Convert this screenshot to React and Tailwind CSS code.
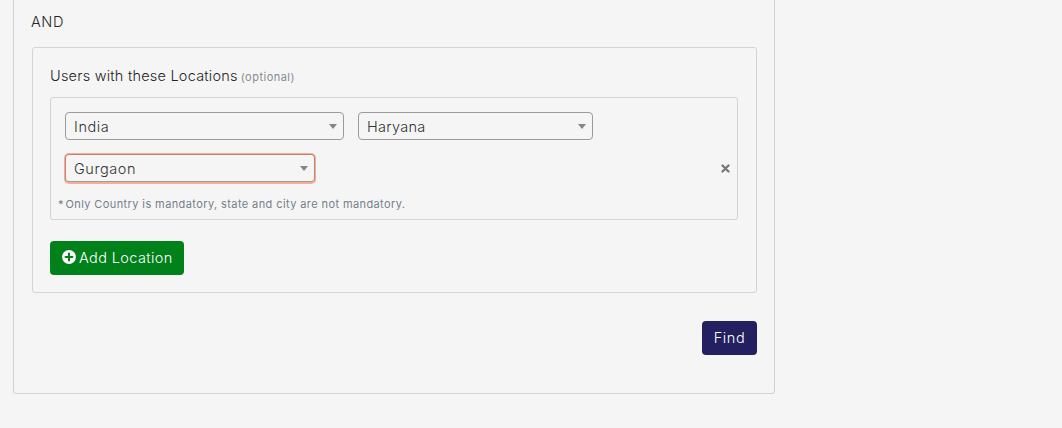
function Select({ value, className, textClass }) {
  return (
    <div className={`flex h-7 items-center justify-between rounded border pl-2 pr-[6px] text-[14.5px] font-light text-[#333] ${className}`}>
      <span className={`whitespace-nowrap pt-px ${textClass}`}>{value}</span>
      <svg className="h-[5px] w-2" viewBox="0 0 8 5" fill="#858585">
        <path d="M0 0h8L4 5z" />
      </svg>
    </div>
  );
}

function PlusCircle() {
  return (
    <svg className="mb-[2px] h-[14px] w-[14px] shrink-0" viewBox="0 0 14 14">
      <circle cx="7" cy="7" r="6.9" fill="currentColor" />
      <path d="M3.6 7h6.8M7 3.6v6.8" stroke="#00811a" strokeWidth="2.1" strokeLinecap="round" />
    </svg>
  );
}

function Times() {
  return (
    <svg className="mr-[2px] h-[9px] w-[9px]" viewBox="0 0 9 9" fill="none" stroke="currentColor" strokeWidth="2.3" strokeLinecap="round">
      <path d="M1.5 1.5l6 6M7.5 1.5l-6 6" />
    </svg>
  );
}

export default function App() {
  return (
    <div className="h-[428px] w-full overflow-hidden bg-[#f5f5f5] pl-[13px] font-['Inter',sans-serif] text-[14.5px] font-light leading-5 text-[#262626]">
      <section className="h-[394px] w-[762px] rounded-b-[3px] border border-t-0 border-[#d3d3d3] pl-[18px] pr-[17px] pt-3">
        <div className="-ml-px h-[35px] pl-px tracking-[0.6px]">
          <span className="-ml-px">AND</span>
        </div>
        <div className="h-[246px] rounded-[3px] border border-[#d3d3d3] pl-[17px] pr-[18px] pt-[18px]">
          <div className="flex h-[31px] items-baseline whitespace-nowrap">
            <span className="tracking-[0.22px]">Users with these Locations</span>
            <span className="ml-[3px] text-[11px] font-normal tracking-[0.48px] text-[#868c92]">(optional)</span>
          </div>
          <div className="h-[123px] rounded-[3px] border border-[#d3d3d3] pl-[14px] pr-[5px] pt-[14px]">
            <div className="flex gap-[14px]">
              <Select value="India" className="w-[279px] border-[#9b9b9b]" textClass="tracking-[0.6px]" />
              <Select value="Haryana" className="w-[235px] border-[#9b9b9b]" textClass="tracking-[0.3px]" />
            </div>
            <div className="mt-[14px] flex items-center justify-between text-[#777]">
              <Select value="Gurgaon" className="w-[250px] border-[#c08372] border-b-[#a39a97] shadow-[0_0_0_1px_#f3ae9a,0_1px_0_1px_#f3ae9a]" textClass="tracking-[0.55px]" />
              <Times />
            </div>
            <p className="-ml-[7px] mt-[12px] whitespace-nowrap text-[11px] font-normal tracking-[0.4px] text-[#76808a]">
              <span className="-mr-[2px]">*</span> Only Country is mandatory, state and city are not mandatory.
            </p>
          </div>
          <button className="mt-[21px] flex h-[34px] w-[134px] items-center gap-[3px] whitespace-nowrap rounded bg-[#00811a] pl-3 text-white">
            <PlusCircle />
            <span className="tracking-[0.38px]">Add Location</span>
          </button>
        </div>
        <div className="mt-7 flex justify-end">
          <button className="h-[34px] w-[55px] rounded bg-[#231f60] tracking-[0.6px] text-white">Find</button>
        </div>
      </section>
    </div>
  );
}
